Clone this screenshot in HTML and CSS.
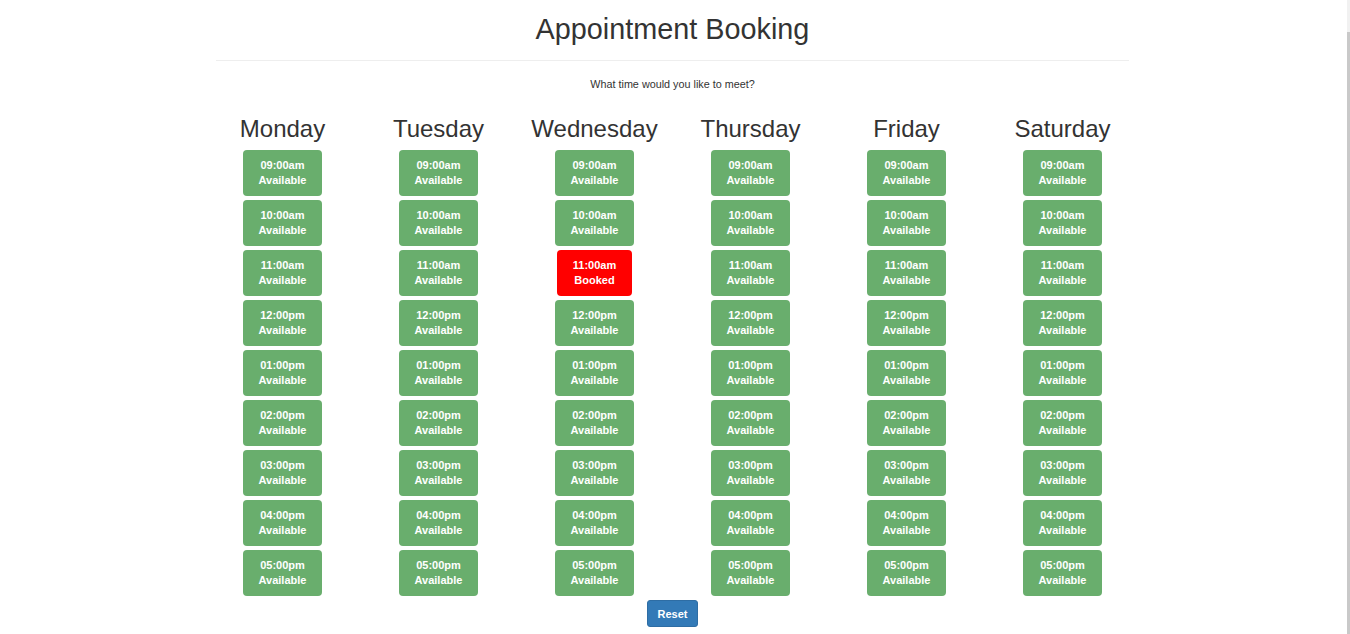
FILE: index.html
```html
<!DOCTYPE html>
<html lang="en">
<head>
<meta charset="utf-8">
<title>Appointment Booking</title>
<link rel="stylesheet" href="styles.css">
</head>
<body>
<div class="page">
  <h1 class="title">Appointment Booking</h1>
  <hr class="rule">
  <p class="lead">What time would you like to meet?</p>
  <div class="week">
    <div class="day">
      <h3 class="day-name">Monday</h3>
      <div class="slots">
        <button class="slot">09:00am<br>Available</button>
        <button class="slot">10:00am<br>Available</button>
        <button class="slot">11:00am<br>Available</button>
        <button class="slot">12:00pm<br>Available</button>
        <button class="slot">01:00pm<br>Available</button>
        <button class="slot">02:00pm<br>Available</button>
        <button class="slot">03:00pm<br>Available</button>
        <button class="slot">04:00pm<br>Available</button>
        <button class="slot">05:00pm<br>Available</button>
      </div>
    </div>
    <div class="day">
      <h3 class="day-name">Tuesday</h3>
      <div class="slots">
        <button class="slot">09:00am<br>Available</button>
        <button class="slot">10:00am<br>Available</button>
        <button class="slot">11:00am<br>Available</button>
        <button class="slot">12:00pm<br>Available</button>
        <button class="slot">01:00pm<br>Available</button>
        <button class="slot">02:00pm<br>Available</button>
        <button class="slot">03:00pm<br>Available</button>
        <button class="slot">04:00pm<br>Available</button>
        <button class="slot">05:00pm<br>Available</button>
      </div>
    </div>
    <div class="day">
      <h3 class="day-name">Wednesday</h3>
      <div class="slots">
        <button class="slot">09:00am<br>Available</button>
        <button class="slot">10:00am<br>Available</button>
        <button class="slot booked">11:00am<br>Booked</button>
        <button class="slot">12:00pm<br>Available</button>
        <button class="slot">01:00pm<br>Available</button>
        <button class="slot">02:00pm<br>Available</button>
        <button class="slot">03:00pm<br>Available</button>
        <button class="slot">04:00pm<br>Available</button>
        <button class="slot">05:00pm<br>Available</button>
      </div>
    </div>
    <div class="day">
      <h3 class="day-name">Thursday</h3>
      <div class="slots">
        <button class="slot">09:00am<br>Available</button>
        <button class="slot">10:00am<br>Available</button>
        <button class="slot">11:00am<br>Available</button>
        <button class="slot">12:00pm<br>Available</button>
        <button class="slot">01:00pm<br>Available</button>
        <button class="slot">02:00pm<br>Available</button>
        <button class="slot">03:00pm<br>Available</button>
        <button class="slot">04:00pm<br>Available</button>
        <button class="slot">05:00pm<br>Available</button>
      </div>
    </div>
    <div class="day">
      <h3 class="day-name">Friday</h3>
      <div class="slots">
        <button class="slot">09:00am<br>Available</button>
        <button class="slot">10:00am<br>Available</button>
        <button class="slot">11:00am<br>Available</button>
        <button class="slot">12:00pm<br>Available</button>
        <button class="slot">01:00pm<br>Available</button>
        <button class="slot">02:00pm<br>Available</button>
        <button class="slot">03:00pm<br>Available</button>
        <button class="slot">04:00pm<br>Available</button>
        <button class="slot">05:00pm<br>Available</button>
      </div>
    </div>
    <div class="day">
      <h3 class="day-name">Saturday</h3>
      <div class="slots">
        <button class="slot">09:00am<br>Available</button>
        <button class="slot">10:00am<br>Available</button>
        <button class="slot">11:00am<br>Available</button>
        <button class="slot">12:00pm<br>Available</button>
        <button class="slot">01:00pm<br>Available</button>
        <button class="slot">02:00pm<br>Available</button>
        <button class="slot">03:00pm<br>Available</button>
        <button class="slot">04:00pm<br>Available</button>
        <button class="slot">05:00pm<br>Available</button>
      </div>
    </div>
  </div>
  <div class="actions">
    <button class="reset">Reset</button>
  </div>
</div>
<div class="scrollbar"><div class="scroll-thumb"></div></div>
</body>
</html>
```

FILE: styles.css
```css
* {
  box-sizing: border-box;
}

html, body {
  margin: 0;
  padding: 0;
  background: #fff;
  overflow: hidden;
}

body {
  font-family: "Liberation Sans", Arial, sans-serif;
  color: #333;
  height: 634px;
}

.page {
  width: 1345px;
  display: flex;
  flex-direction: column;
  align-items: center;
}

.title {
  margin: 12px 0 0;
  font-size: 28.8px;
  line-height: 34px;
  font-weight: 400;
  color: #333;
}

.rule {
  width: 913px;
  margin: 14px 0 0;
  border: 0;
  border-top: 1px solid #eee;
  height: 0;
}

.lead {
  margin: 16px 0 0;
  font-size: 10.8px;
  line-height: 15px;
  color: #333;
}

.week {
  width: 936px;
  display: flex;
  margin-top: 23px;
}

.day {
  width: 156px;
  display: flex;
  flex-direction: column;
  align-items: center;
}

.day-name {
  margin: 0;
  font-size: 24px;
  line-height: 28px;
  font-weight: 400;
  color: #333;
}

.slots {
  margin-top: 7px;
  display: flex;
  flex-direction: column;
  gap: 4px;
  align-items: center;
}

.slot {
  width: 79px;
  height: 46px;
  padding: 0;
  border: 0;
  border-radius: 4px;
  background: #69ae6d;
  color: #fff;
  font-family: "Liberation Sans", Arial, sans-serif;
  font-size: 11px;
  font-weight: 700;
  line-height: 15px;
  text-align: center;
}

.slot.booked {
  background: #ff0000;
  width: 75px;
}

.actions {
  margin-top: 4px;
}

.reset {
  width: 51px;
  height: 27px;
  padding: 0;
  border: 1px solid #2e6da4;
  border-radius: 3px;
  background: #337ab7;
  color: #fff;
  font-family: "Liberation Sans", Arial, sans-serif;
  font-size: 11px;
  font-weight: 700;
}

.scrollbar {
  position: fixed;
  top: 0;
  right: 0;
  width: 3px;
  height: 634px;
  background: #f1f1f1;
}

.scroll-thumb {
  margin-top: 32px;
  height: 602px;
  background: #c9c9c9;
}
```
